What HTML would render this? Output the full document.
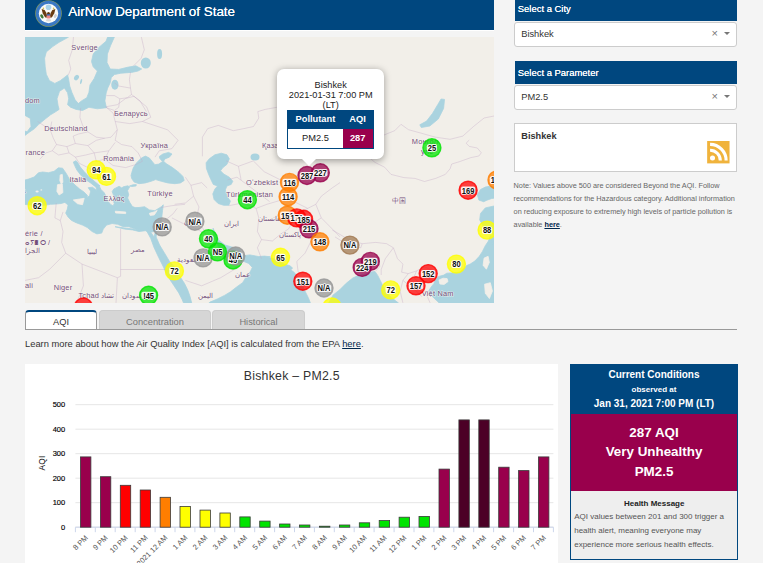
<!DOCTYPE html>
<html><head><meta charset="utf-8"><title>AirNow Department of State</title>
<style>
html,body{margin:0;padding:0;}
body{width:763px;height:563px;overflow:hidden;background:#f4f4f4;font-family:"Liberation Sans",sans-serif;position:relative;color:#333;}
.abs{position:absolute;}
.navy{background:#00477f;color:#fff;}
#hdr{left:25px;top:0;width:469px;height:30px;}
#hdrline{left:25px;top:30px;width:469px;height:1px;background:#fff;}
#hdr .t{position:absolute;left:43.3px;top:2.5px;font-size:13.4px;line-height:18px;white-space:nowrap;text-shadow:0 0 0.4px #fff;}
#map{left:25px;top:37px;width:469px;height:265.7px;background:#f2efe9;overflow:hidden;}
.sbh{left:515px;width:222px;height:22px;font-size:9.45px;line-height:19.4px;text-indent:2.8px;text-shadow:0 0 0.25px #fff;}
.sel{left:514.2px;width:221.2px;height:23px;background:#fff;border:1px solid #ccc;border-radius:3px;font-size:9.3px;line-height:22px;color:#333;}
.sel span{position:absolute;left:6px;top:0;}
.sel .x{position:absolute;left:196.3px;top:-1px;font-size:11px;color:#777;}
.sel .arr{position:absolute;left:208.8px;top:9.3px;width:0;height:0;border-left:3px solid transparent;border-right:3px solid transparent;border-top:3px solid #777;}
#citybox{left:514.3px;top:123px;width:221.2px;height:46.6px;background:#fff;border:1px solid #ccc;}
#citybox b{position:absolute;left:6px;top:7px;font-size:9.2px;line-height:11px;color:#333;}
#note{left:513.6px;top:179.3px;width:240px;font-size:7.3px;line-height:13px;color:#666;}
#note a{color:#00264d;font-weight:bold;text-decoration:underline;}
.tab{top:310px;height:19px;border:1px solid #ccc;border-bottom:none;border-radius:4px 4px 0 0;background:#d6d6d6;color:#777;font-size:9.3px;line-height:22px;text-align:center;}
#tab1{left:25px;width:70px;background:#fff;border-color:#999;border-top:2px solid #00477f;height:18px;color:#333;line-height:20px;}
#tabline{left:25px;top:329px;width:712px;height:1px;background:#999;}
#learn{left:25px;top:337.7px;font-size:9.35px;line-height:12px;color:#333;white-space:nowrap;}
#learn a{color:#00264d;text-decoration:underline;}
#chartbox{left:25px;top:364px;width:533px;height:199px;background:#fff;}
#cc{left:570px;top:364px;width:166px;height:193.5px;border:1px solid #00477f;background:#eee;}
#cc .h{position:absolute;left:0;top:0;width:166px;height:49px;text-align:center;font-weight:bold;font-size:10px;line-height:14px;}
#cc .p{position:absolute;left:0;top:49px;width:166px;height:77px;background:#99004c;color:#fff;text-align:center;font-weight:bold;font-size:13.4px;line-height:19.4px;}
#cc .m{position:absolute;left:3.2px;top:132px;width:163px;font-size:8px;line-height:14.2px;color:#555;white-space:nowrap;}
</style></head><body>
<div id="hdr" class="abs navy"><div class="t">AirNow Department of State</div>
<svg class="abs" style="left:9.9px;top:0" width="27" height="27" viewBox="0 0 27 27"><circle cx="13.5" cy="13.5" r="13.3" fill="#8a9a55"/><circle cx="13.5" cy="13.5" r="12.7" fill="#3a78c4"/><circle cx="13.5" cy="13.5" r="9.7" fill="#fbfbf8"/><circle cx="13.5" cy="7.2" r="2.8" fill="#a9d3ea"/><path d="M6.6 9.1 L9.6 9.9 L11.3 12.7 L12.1 15.4 L11.3 18.2 L9.6 16.5 L7.7 13.2 Z" fill="#6a3d12"/><path d="M20.4 9.1 L17.4 9.9 L15.7 12.7 L14.9 15.4 L15.7 18.2 L17.4 16.5 L19.3 13.2 Z" fill="#6a3d12"/><ellipse cx="13.5" cy="13.6" rx="1.5" ry="1.6" fill="#5a3410"/><circle cx="8.4" cy="8.4" r="0.8" fill="#d4c24e"/><circle cx="18.6" cy="8.4" r="0.8" fill="#d4c24e"/><ellipse cx="6.9" cy="16.4" rx="1.4" ry="2.3" transform="rotate(-30 6.9 16.4)" fill="#3d7a3a"/><ellipse cx="20.3" cy="16" rx="1.3" ry="2" transform="rotate(30 20.3 16)" fill="#d0d0d0"/><rect x="11.8" y="14.1" width="3.4" height="4.3" rx="0.6" fill="#ee8688"/><rect x="11.8" y="14.1" width="3.4" height="1.4" fill="#2d5fa8"/><ellipse cx="13.5" cy="20.3" rx="2.6" ry="1.3" fill="#dcdcdc"/></svg></div>
<div id="hdrline" class="abs"></div>
<div id="map" class="abs"><svg class="abs" style="left:0;top:0;font-family:'Liberation Sans',sans-serif" width="469" height="266" viewBox="0 0 469 266"><path d="M-1.1 -1.1 L43.7 -1.1 L43.7 0.0 L34.1 5.3 L27.7 9.6 L21.3 14.9 L19.6 21.3 L20.2 29.8 L21.3 37.3 L24.5 43.7 L29.8 46.4 L35.2 43.7 L39.4 40.5 L42.6 37.9 L43.7 42.6 L44.7 49.0 L46.9 55.4 L50.1 62.8 L53.3 66.5 L51.1 69.2 L45.8 70.3 L42.6 67.7 L43.7 61.8 L42.6 55.8 L39.4 51.1 L34.5 54.3 L32.0 61.8 L33.0 68.2 L34.1 72.4 L30.9 74.6 L25.6 77.8 L20.2 82.0 L13.8 87.3 L9.6 91.6 L4.3 95.2 L0.0 98.4 L-1.1 98.4 L-1.1 93.7 L2.1 94.8 L6.0 89.5 L5.3 81.4 L0.0 78.4 L-1.1 78.4Z" fill="#aad3df" stroke="#aad3df" stroke-width="0.8" stroke-linejoin="round" />
<path d="M83.1 -1.1 L89.9 -1.1 L85.6 8.5 L82.4 17.0 L82.0 25.6 L85.2 32.0 L93.7 32.4 L102.3 30.3 L110.8 28.8 L116.7 32.0 L112.9 34.1 L106.5 35.4 L95.9 36.2 L89.5 37.5 L86.3 40.5 L85.2 45.8 L82.7 51.1 L81.2 55.8 L79.9 63.9 L81.4 70.7 L72.4 71.8 L63.9 70.3 L57.5 73.5 L51.1 72.4 L45.8 70.3 L51.1 69.2 L53.3 66.5 L56.5 63.9 L61.8 60.7 L63.9 55.4 L65.0 47.9 L69.2 41.5 L72.4 34.1 L68.2 29.8 L66.5 24.5 L68.2 17.0 L73.5 10.7 L81.0 4.3Z" fill="#aad3df" stroke="#aad3df" stroke-width="0.8" stroke-linejoin="round" />
<ellipse cx="120.8" cy="26.0" rx="5" ry="5.5" fill="#aad3df" transform="rotate(0 120.8 26.0)"/>
<ellipse cx="89.9" cy="47.7" rx="3.6" ry="5" fill="#aad3df" transform="rotate(0 89.9 47.7)"/>
<ellipse cx="134.6" cy="17.0" rx="2.5" ry="5" fill="#aad3df" transform="rotate(0 134.6 17.0)"/>
<ellipse cx="51.5" cy="40.6" rx="2.2" ry="3" fill="#aad3df" transform="rotate(35 51.5 40.6)"/>
<ellipse cx="56.1" cy="44.6" rx="0.9" ry="2.6" fill="#aad3df" transform="rotate(15 56.1 44.6)"/>
<path d="M-2.2 143.6 L3.5 142.1 L9.2 140.0 L13.5 135.7 L17.7 135.0 L23.4 135.7 L29.1 134.3 L33.4 130.8 L37.6 131.2 L41.2 136.4 L44.0 141.4 L49.0 147.1 L54.7 152.1 L58.9 154.9 L62.5 158.5 L61.8 162.0 L59.7 163.0 L64.6 158.5 L65.6 154.2 L63.2 150.7 L67.5 150.2 L71.7 153.5 L71.0 150.2 L65.3 145.7 L61.1 143.1 L56.1 138.6 L51.8 132.9 L49.7 128.6 L48.3 125.1 L51.1 123.7 L53.3 126.5 L55.1 129.8 L59.1 134.6 L63.9 139.4 L70.3 145.0 L75.1 149.0 L73.8 148.2 L76.0 152.5 L79.2 155.7 L81.3 160.0 L82.9 164.2 L85.6 167.4 L88.2 169.0 L89.3 166.3 L87.7 163.2 L90.9 162.1 L88.8 158.9 L87.2 154.6 L88.8 152.0 L90.9 150.9 L94.1 149.3 L96.8 150.9 L98.3 149.8 L102.6 148.8 L104.7 149.8 L102.6 153.6 L103.7 157.8 L102.6 161.0 L104.7 165.3 L107.4 169.5 L110.1 170.6 L114.0 170.5 L119.6 169.7 L124.4 172.9 L129.9 173.7 L136.3 169.7 L138.3 167.8 L137.5 173.7 L136.8 180.1 L135.5 188.1 L133.9 192.9 L129.9 194.5 L124.4 195.3 L120.4 193.7 L114.0 194.5 L107.6 192.9 L99.6 192.1 L90.0 189.7 L115.1 192.9 L110.3 192.1 L103.9 189.7 L97.5 189.4 L92.7 187.3 L87.1 186.5 L81.5 188.1 L78.3 192.1 L76.7 196.1 L71.9 196.9 L67.1 194.5 L62.3 190.5 L57.5 188.1 L51.1 185.7 L46.3 183.3 L43.1 180.1 L40.7 176.1 L42.3 172.1 L43.1 168.1 L39.9 165.4 L36.0 166.5 L31.2 167.0 L25.6 167.3 L20.8 168.1 L12.8 168.9 L6.4 168.1 L-1.6 167.3Z" fill="#aad3df" stroke="#aad3df" stroke-width="0.8" stroke-linejoin="round" />
<path d="M35.2 137.9 L37.3 137.4 L37.9 145.4 L36.2 146.8 L34.8 143.6Z" fill="#f2efe9" stroke="#f2efe9" stroke-width="0.8" stroke-linejoin="round" />
<path d="M32.5 147.7 L37.3 146.8 L37.9 155.6 L34.1 158.0 L31.9 154.2Z" fill="#f2efe9" stroke="#f2efe9" stroke-width="0.8" stroke-linejoin="round" />
<ellipse cx="12.1" cy="154.5" rx="1.6" ry="1.1" fill="#f2efe9" transform="rotate(0 12.1 154.5)"/>
<ellipse cx="16.3" cy="152.9" rx="0.9" ry="0.7" fill="#f2efe9" transform="rotate(0 16.3 152.9)"/>
<path d="M48.3 163.0 L54.7 162.0 L59.2 161.3 L57.5 167.7 L52.5 166.7Z" fill="#f2efe9" stroke="#f2efe9" stroke-width="0.8" stroke-linejoin="round" />
<path d="M90.3 174.2 L100.7 175.0 L100.7 176.6 L90.6 176.0Z" fill="#f2efe9" stroke="#f2efe9" stroke-width="0.8" stroke-linejoin="round" />
<path d="M124.4 176.3 L129.9 174.7 L132.2 173.4 L129.3 177.9 L125.2 178.4Z" fill="#f2efe9" stroke="#f2efe9" stroke-width="0.8" stroke-linejoin="round" />
<path d="M106.8 135.4 L108.4 130.6 L111.6 125.8 L116.4 121.0 L120.4 119.1 L124.4 121.0 L127.6 125.0 L129.9 127.7 L133.9 127.1 L137.5 124.5 L134.7 121.3 L134.4 119.4 L137.9 117.0 L143.5 115.4 L147.0 117.0 L144.3 120.2 L139.9 121.9 L138.6 124.2 L141.1 126.6 L147.5 130.6 L153.9 135.4 L157.9 139.4 L159.2 143.4 L155.5 145.9 L149.9 146.7 L142.7 145.9 L136.3 144.3 L130.7 142.6 L126.0 144.3 L120.4 145.9 L114.0 146.7 L109.2 145.1 L106.8 141.8 L106.0 138.6Z" fill="#aad3df" stroke="#aad3df" stroke-width="0.8" stroke-linejoin="round" />
<path d="M104.5 149.0 L107.9 147.8 L111.3 147.6 L111.1 148.9 L106.9 149.5Z" fill="#aad3df" stroke="#aad3df" stroke-width="0.8" stroke-linejoin="round" />
<path d="M121.8 188.8 L125.8 195.2 L129.0 200.0 L131.4 191.2 L132.5 191.5 L131.1 200.0 L134.6 208.0 L139.4 215.9 L144.2 223.9 L149.0 229.5 L154.6 239.1 L159.4 246.3 L162.6 252.7 L164.9 259.1 L167.2 267.9 L159.4 267.9 L157.0 262.3 L153.8 255.9 L149.0 248.7 L144.2 241.5 L141.8 237.5 L138.6 230.3 L133.8 220.7 L129.0 210.4 L125.8 201.6 L120.2 191.2Z" fill="#aad3df" stroke="#aad3df" stroke-width="0.8" stroke-linejoin="round" />
<path d="M181.1 125.8 L184.3 121.8 L189.9 117.8 L196.3 116.2 L201.9 117.8 L204.3 121.8 L201.9 127.4 L197.9 130.6 L195.5 133.8 L198.7 137.0 L204.3 140.2 L207.8 144.2 L206.2 147.4 L201.9 149.0 L200.3 152.9 L201.9 159.3 L205.4 164.1 L203.8 168.3 L198.7 168.3 L193.1 166.5 L189.1 162.5 L187.8 156.9 L189.9 152.1 L192.6 149.0 L188.3 147.4 L185.9 142.6 L183.5 137.0 L181.4 131.4Z" fill="#aad3df" stroke="#aad3df" stroke-width="0.8" stroke-linejoin="round" />
<ellipse cx="230" cy="120" rx="4.5" ry="3.5" fill="#aad3df"/>
<path d="M188.1 191.2 L190.5 196.8 L193.7 203.2 L200.1 208.0 L208.1 210.4 L214.5 212.0 L216.4 216.1 L220.0 218.5 L224.9 217.9 L233.3 219.5 L239.4 219.1 L245.4 219.8 L243.4 220.4 L248.1 221.5 L259.3 227.1 L264.9 228.7 L267.6 231.1 L265.7 232.9 L268.9 235.1 L272.1 239.1 L276.1 244.7 L279.3 252.7 L283.3 260.7 L286.2 267.9 L180.2 269.3 L185.0 265.1 L192.3 262.0 L199.5 258.4 L205.5 254.8 L211.6 250.0 L217.6 245.7 L221.3 239.7 L225.5 234.3 L227.3 230.4 L223.7 226.4 L217.6 224.0 L214.0 222.2 L212.9 226.8 L204.9 225.5 L200.1 222.3 L196.9 215.9 L193.7 210.4 L190.5 203.2 L188.4 196.8Z" fill="#aad3df" stroke="#aad3df" stroke-width="0.8" stroke-linejoin="round" />
<path d="M302.9 267.2 L308.1 258.0 L314.7 252.8 L321.2 246.3 L327.8 241.0 L333.0 238.6 L339.6 237.3 L344.8 235.1 L350.0 234.5 L352.7 238.4 L355.3 243.6 L357.9 248.9 L361.8 255.4 L366.4 260.7 L370.4 263.6 L374.9 267.2Z" fill="#aad3df" stroke="#aad3df" stroke-width="0.8" stroke-linejoin="round" />
<path d="M416.5 270.6 L413.5 265.3 L409.4 261.5 L405.2 257.3 L403.7 253.7 L406.0 250.2 L409.0 246.4 L410.5 241.2 L412.8 240.1 L414.6 239.2 L418.8 238.1 L421.8 236.2 L426.4 235.9 L434.7 235.1 L438.4 232.1 L441.5 228.6 L445.2 227.1 L449.8 224.1 L454.3 219.3 L457.3 214.7 L460.3 208.7 L463.4 204.1 L465.6 198.1 L468.6 208.0 L465.4 203.2 L468.6 192.0 L461.9 193.0 L457.9 188.5 L454.7 182.9 L455.5 176.5 L460.3 170.9 L471.4 168.5 L471.4 258.8 L471.4 267.9Z" fill="#aad3df" stroke="#aad3df" stroke-width="0.8" stroke-linejoin="round" />
<path d="M452.3 157.7 L455.5 152.5 L460.3 150.1 L464.3 149.3 L471.4 150.3 L471.4 160.8 L466.7 161.5 L461.9 163.2 L458.7 164.7 L453.9 163.1Z" fill="#aad3df" stroke="#aad3df" stroke-width="0.8" stroke-linejoin="round" />
<path d="M414.0 243.0 L418.1 241.2 L422.1 241.6 L423.0 244.6 L419.1 247.4 L414.9 247.0Z" fill="#f2efe9" stroke="#f2efe9" stroke-width="0.8" stroke-linejoin="round" />
<path d="M459.1 221.1 L463.1 219.3 L464.3 225.3 L461.4 232.2 L458.1 228.3Z" fill="#f2efe9" stroke="#f2efe9" stroke-width="0.8" stroke-linejoin="round" />
<path d="M459.6 247.2 L465.3 245.7 L467.4 254.0 L464.4 261.5 L460.3 256.3Z" fill="#f2efe9" stroke="#f2efe9" stroke-width="0.8" stroke-linejoin="round" />
<path d="M419.5 62.4 L418.6 71.4 L413.3 82.0 L404.8 89.0 L396.3 90.5 L394.8 87.8 L401.6 84.1 L407.6 76.3 L412.7 67.7 L416.1 62.0Z" fill="#aad3df" stroke="#aad3df" stroke-width="0.8" stroke-linejoin="round" /><path d="M55.6 70.8 L54.9 80.3 L57.7 88.6 L62.9 94.9 M80.7 69.8 L88.1 76.1 L90.2 84.5 L92.3 92.8 L86.0 100.2 M62.9 94.9 L71.3 100.2 L79.7 101.2 L86.0 100.2 M26.8 84.5 L25.2 92.8 L28.3 101.2 L31.5 107.5 L27.3 113.8 L21.0 115.9 L14.7 122.2 M31.5 107.5 L41.9 109.6 L50.3 106.5 L48.2 99.1 L53.5 97.0 L62.9 94.9 M80.7 69.8 L92.3 67.7 L100.7 61.4 L109.0 59.3 L121.6 69.8 L125.8 80.3 L117.4 84.5 M90.2 84.5 L104.8 86.6 L117.4 84.5 L130.0 88.6 L142.6 92.8 L153.1 103.3 L146.8 111.7 L134.2 113.8 L130.0 120.1 M92.3 92.8 L90.2 103.3 L96.5 107.5 L106.9 109.6 L113.2 115.9 L117.4 124.3 M90.2 105.4 L83.9 113.8 L79.7 122.2 L88.1 128.5 L100.7 130.6 L111.1 127.4 L117.4 124.3 M50.3 106.5 L62.9 108.6 L71.3 103.3 L79.7 101.2 M62.9 108.6 L69.2 115.9 L83.9 113.8 M41.9 109.6 L44.0 115.9 L50.3 120.1 L60.8 118.0 L69.2 115.9 M12.6 84.5 L18.9 88.6 L25.2 92.8 M50.3 120.1 L54.5 126.4 L62.9 130.6 L71.3 136.9 M69.2 115.9 L71.3 124.3 L79.7 122.2 M27.3 113.8 L33.6 118.0 L44.0 115.9 M48.6 -1.1 L47.3 12.8 L43.7 23.4 L45.8 32.0 L43.2 38.3 M116.1 -1.1 L119.3 12.8 L116.1 21.3 L108.6 28.8 M105.5 35.2 L104.4 42.6 L105.5 51.1 L106.5 57.5 M89.5 45.8 L93.7 49.0 L105.5 51.1 M81.4 58.6 L89.5 58.6 L94.8 61.8 L102.3 60.7 L106.5 57.5 L115.0 63.9 L121.4 74.6 M94.8 61.8 L93.7 70.3 L89.5 73.5 L81.4 70.7 M177.4 119.3 L177.4 100.1 L182.7 91.6 L193.3 88.4 L208.3 93.7 L218.9 91.6 L228.5 89.5 L233.8 81.0 L232.8 74.6 L240.2 72.4 L251.9 70.3 M359.0 98.0 L369.7 93.7 L376.0 87.3 L383.5 92.7 L395.2 95.9 L410.1 100.1 L425.0 102.3 L437.8 99.1 L448.5 89.5 L459.1 81.0 L470.0 78.8 M340.4 117.4 L350.0 125.4 L359.6 130.2 L366.0 137.4 L378.8 140.6 L389.9 141.4 L399.5 144.5 L410.7 141.4 L420.3 137.4 L425.1 131.8 L426.7 127.0 L434.7 124.6 L445.9 120.6 L453.9 119.0 L456.3 115.8 L452.3 111.0 L444.3 109.4 L441.1 106.2 L444.3 103.0 M203.9 168.7 L217.5 166.0 L231.1 171.4 L233.8 180.9 L232.4 194.5 L236.5 202.6 L232.4 210.8 L236.5 221.7 M236.5 202.6 L247.4 204.0 L255.5 197.2 L263.7 191.8 L269.1 180.9 L274.5 175.5 L282.7 171.4 M231.1 171.4 L241.9 167.3 L255.5 163.3 L269.1 164.6 L282.7 171.4 L290.8 167.3 L296.3 159.2 L307.1 151.0 L315.0 145.6 M202.5 142.9 L212.0 140.2 L222.9 148.3 L233.8 156.5 L244.6 164.6 M201.2 123.9 L213.4 129.3 L216.1 142.9 M213.4 129.3 L228.3 123.9 L239.2 134.7 L250.1 140.2 L260.9 145.6 L271.8 142.9 L282.7 145.6 L296.3 142.9 M273.2 235.2 L271.8 224.4 L280.0 216.2 L285.4 205.4 L290.8 194.5 L288.1 186.3 L296.3 180.9 L307.1 191.8 L315.0 199.9 M296.3 180.9 L290.8 167.3 M160.4 140.2 L165.9 148.3 L168.6 159.2 L174.0 170.0 L171.3 180.9 L178.1 191.8 L180.8 197.2 M149.6 167.3 L160.4 166.0 L168.6 159.2 M146.9 180.9 L157.7 186.3 L171.3 191.8 L180.8 197.2 M160.4 243.4 L176.7 248.8 L195.7 240.7 L209.3 232.5 L216.1 221.7 L213.4 216.2 M165.9 148.3 L176.7 145.6 L182.2 151.0 M95.6 191.8 L95.6 239.3 L92.4 240.7 L91.0 265.9 M95.6 232.5 L141.3 232.5 M38.0 174.9 L35.3 183.6 L38.0 194.5 L36.7 205.4 L40.7 216.2 L57.0 227.1 L92.4 240.7 M40.7 216.2 L24.4 232.5 L13.6 240.7 L0.0 243.4 M57.0 227.1 L58.4 248.8 L51.6 265.9 M31.2 166.0 L29.9 180.9 L35.3 183.6 M135.8 170.6 L146.7 168.7 L160.0 167.3 M133.7 183.6 L141.3 182.3 L148.1 176.8 L152.1 171.4 M307.3 193.1 L310.0 194.5 L323.6 202.6 L337.2 206.7 L350.7 205.4 L361.6 206.7 L368.4 210.8 M310.0 199.9 L320.9 206.7 L335.8 210.8 L337.2 206.7 M368.4 210.8 L372.5 221.7 L377.9 227.1 L376.6 235.2 L383.3 236.6 M368.4 210.8 L360.3 221.7 L356.2 232.5 L356.2 238.0 M342.6 218.9 L353.5 220.3 L354.8 229.8 L350.7 233.9 M342.6 218.9 L341.2 232.5 M383.3 236.6 L377.9 243.4 L375.2 254.3 L377.9 265.9 M383.3 236.6 L391.5 233.9 L399.6 229.8 L407.8 233.9 L403.7 243.4 M391.5 233.9 L388.8 240.7 L396.9 248.8 L402.4 259.7 L405.1 265.9 M377.9 243.4 L384.7 248.8 L391.5 254.3 L396.9 259.7" fill="none" stroke="#c4a9c6" stroke-opacity="0.6" stroke-width="0.65" stroke-linejoin="round"/><g font-size="7.4" fill="#6b4475" fill-opacity="0.95" stroke="#f6f3ee" stroke-width="1.2" stroke-opacity="0.7" paint-order="stroke" letter-spacing="0.2"><text x="59.6" y="12.5" text-anchor="middle">Sverige</text><text x="0.0" y="65.6" text-anchor="start">dom</text><text x="-3.5" y="155.6" text-anchor="start">a</text><text x="40.9" y="93.6" text-anchor="middle">Deutschland</text><text x="105.9" y="78.6" text-anchor="middle">Беларусь</text><text x="129.3" y="110.6" text-anchor="middle">Україна</text><text x="0.5" y="118.4" text-anchor="start">rance</text><text x="93.7" y="124.4" text-anchor="middle">România</text><text x="53.0" y="145.3" text-anchor="middle">Italia</text><text x="89.1" y="163.8" text-anchor="middle">Ελλάς</text><text x="135.0" y="159.4" text-anchor="middle">Türkiye</text><text x="67.4" y="216.5" text-anchor="middle">ليبيا</text><text x="112.7" y="214.6" text-anchor="middle">مصر</text><text x="38.0" y="252.6" text-anchor="middle">Niger</text><text x="71.4" y="260.7" text-anchor="middle">Tchad تشاد</text><text x="0.0" y="199.4" text-anchor="start">érie /</text><text x="0.0" y="207.8" text-anchor="start">ⴰⵢⴻⵔ /</text><text x="0.0" y="216.0" text-anchor="start">الجزا</text><text x="0.0" y="251.2" text-anchor="start">ali</text><text x="237.0" y="110.6" text-anchor="start">Қаза</text><text x="221.0" y="148.0" text-anchor="start">Oʻzbekist</text><text x="201.0" y="159.7" text-anchor="start">Türkmenistan</text><text x="206.6" y="189.3" text-anchor="middle">ایران</text><text x="246.0" y="183.9" text-anchor="middle">افغانستان</text><text x="265.0" y="199.6" text-anchor="middle">پاکستان</text><text x="217.5" y="240.4" text-anchor="middle">عمان</text><text x="180.8" y="260.7" text-anchor="middle">اليمن</text><text x="165.0" y="224.7" text-anchor="middle">السعودية</text><text x="168.0" y="186.5" text-anchor="middle">العراق</text><text x="108.7" y="261.3" text-anchor="middle">السودان</text><text x="400.0" y="106.8" text-anchor="middle">Монгол</text><text x="402.0" y="116.5" text-anchor="middle">улс</text><text x="374.4" y="165.7" text-anchor="middle">中国</text><text x="412.7" y="259.4" text-anchor="middle">Việt Nam</text></g><circle cx="12.2" cy="168.7" r="9" fill="#ffff00" fill-opacity="0.74" stroke="#ffff00" stroke-opacity="0.8" stroke-width="1.4"/>
<circle cx="71.2" cy="132.8" r="9" fill="#ffff00" fill-opacity="0.74" stroke="#ffff00" stroke-opacity="0.8" stroke-width="1.4"/>
<circle cx="81.5" cy="139.4" r="9" fill="#ffff00" fill-opacity="0.74" stroke="#ffff00" stroke-opacity="0.8" stroke-width="1.4"/>
<circle cx="137.2" cy="189.9" r="9" fill="#969696" fill-opacity="0.74" stroke="#969696" stroke-opacity="0.8" stroke-width="1.4"/>
<circle cx="149.4" cy="233.9" r="9" fill="#ffff00" fill-opacity="0.74" stroke="#ffff00" stroke-opacity="0.8" stroke-width="1.4"/>
<circle cx="123.6" cy="258.3" r="9" fill="#00e400" fill-opacity="0.74" stroke="#00e400" stroke-opacity="0.8" stroke-width="1.4"/>
<circle cx="58.4" cy="270.0" r="9" fill="#ff0000" fill-opacity="0.74" stroke="#ff0000" stroke-opacity="0.8" stroke-width="1.4"/>
<circle cx="169.9" cy="184.2" r="9" fill="#969696" fill-opacity="0.74" stroke="#969696" stroke-opacity="0.8" stroke-width="1.4"/>
<circle cx="183.5" cy="201.8" r="9" fill="#00e400" fill-opacity="0.74" stroke="#00e400" stroke-opacity="0.8" stroke-width="1.4"/>
<circle cx="178.1" cy="220.9" r="9" fill="#969696" fill-opacity="0.74" stroke="#969696" stroke-opacity="0.8" stroke-width="1.4"/>
<circle cx="208.0" cy="223.0" r="9" fill="#00e400" fill-opacity="0.74" stroke="#00e400" stroke-opacity="0.8" stroke-width="1.4"/>
<circle cx="192.5" cy="214.9" r="9" fill="#00e400" fill-opacity="0.74" stroke="#00e400" stroke-opacity="0.8" stroke-width="1.4"/>
<circle cx="210.7" cy="219.0" r="9" fill="#969696" fill-opacity="0.74" stroke="#969696" stroke-opacity="0.8" stroke-width="1.4"/>
<circle cx="222.4" cy="162.7" r="9" fill="#00e400" fill-opacity="0.74" stroke="#00e400" stroke-opacity="0.8" stroke-width="1.4"/>
<circle cx="263.1" cy="159.7" r="9" fill="#ff7e00" fill-opacity="0.74" stroke="#ff7e00" stroke-opacity="0.8" stroke-width="1.4"/>
<circle cx="264.5" cy="145.4" r="9" fill="#ff7e00" fill-opacity="0.74" stroke="#ff7e00" stroke-opacity="0.8" stroke-width="1.4"/>
<circle cx="282.0" cy="138.5" r="9" fill="#99004c" fill-opacity="0.74" stroke="#99004c" stroke-opacity="0.8" stroke-width="1.4"/>
<circle cx="295.3" cy="135.8" r="9" fill="#99004c" fill-opacity="0.74" stroke="#99004c" stroke-opacity="0.8" stroke-width="1.4"/>
<circle cx="262.3" cy="178.2" r="9" fill="#ff7e00" fill-opacity="0.74" stroke="#ff7e00" stroke-opacity="0.8" stroke-width="1.4"/>
<circle cx="271.8" cy="180.9" r="9" fill="#ff0000" fill-opacity="0.74" stroke="#ff0000" stroke-opacity="0.8" stroke-width="1.4"/>
<circle cx="278.6" cy="182.3" r="9" fill="#ff0000" fill-opacity="0.74" stroke="#ff0000" stroke-opacity="0.8" stroke-width="1.4"/>
<circle cx="284.0" cy="191.8" r="9" fill="#99004c" fill-opacity="0.74" stroke="#99004c" stroke-opacity="0.8" stroke-width="1.4"/>
<circle cx="294.9" cy="204.8" r="9" fill="#ff7e00" fill-opacity="0.74" stroke="#ff7e00" stroke-opacity="0.8" stroke-width="1.4"/>
<circle cx="255.5" cy="220.3" r="9" fill="#ffff00" fill-opacity="0.74" stroke="#ffff00" stroke-opacity="0.8" stroke-width="1.4"/>
<circle cx="277.8" cy="244.2" r="9" fill="#ff0000" fill-opacity="0.74" stroke="#ff0000" stroke-opacity="0.8" stroke-width="1.4"/>
<circle cx="299.0" cy="251.0" r="9" fill="#969696" fill-opacity="0.74" stroke="#969696" stroke-opacity="0.8" stroke-width="1.4"/>
<circle cx="307.0" cy="270.0" r="9" fill="#ffff00" fill-opacity="0.74" stroke="#ffff00" stroke-opacity="0.8" stroke-width="1.4"/>
<circle cx="324.9" cy="208.1" r="9" fill="#a07850" fill-opacity="0.74" stroke="#a07850" stroke-opacity="0.8" stroke-width="1.4"/>
<circle cx="337.2" cy="230.4" r="9" fill="#99004c" fill-opacity="0.74" stroke="#99004c" stroke-opacity="0.8" stroke-width="1.4"/>
<circle cx="345.3" cy="224.4" r="9" fill="#99004c" fill-opacity="0.74" stroke="#99004c" stroke-opacity="0.8" stroke-width="1.4"/>
<circle cx="365.7" cy="252.9" r="9" fill="#ffff00" fill-opacity="0.74" stroke="#ffff00" stroke-opacity="0.8" stroke-width="1.4"/>
<circle cx="391.0" cy="248.8" r="9" fill="#ff0000" fill-opacity="0.74" stroke="#ff0000" stroke-opacity="0.8" stroke-width="1.4"/>
<circle cx="403.2" cy="236.6" r="9" fill="#ff0000" fill-opacity="0.74" stroke="#ff0000" stroke-opacity="0.8" stroke-width="1.4"/>
<circle cx="431.4" cy="227.1" r="9" fill="#ffff00" fill-opacity="0.74" stroke="#ffff00" stroke-opacity="0.8" stroke-width="1.4"/>
<circle cx="462.1" cy="193.1" r="9" fill="#ffff00" fill-opacity="0.74" stroke="#ffff00" stroke-opacity="0.8" stroke-width="1.4"/>
<circle cx="443.1" cy="153.2" r="9" fill="#ff0000" fill-opacity="0.74" stroke="#ff0000" stroke-opacity="0.8" stroke-width="1.4"/>
<circle cx="472.0" cy="142.9" r="9" fill="#ff7e00" fill-opacity="0.74" stroke="#ff7e00" stroke-opacity="0.8" stroke-width="1.4"/>
<circle cx="406.9" cy="110.8" r="9" fill="#00e400" fill-opacity="0.74" stroke="#00e400" stroke-opacity="0.8" stroke-width="1.4"/>
<rect x="7.2" y="165.1" width="10.1" height="7.4" rx="2" fill="#fff" fill-opacity="0.85"/><text transform="translate(12.2,172.0) scale(0.84,1)" text-anchor="middle" font-size="9" font-weight="bold" fill="#111" stroke="#fff" stroke-width="1.6" stroke-opacity="0.9" stroke-linejoin="round" paint-order="stroke">62</text>
<rect x="66.2" y="129.2" width="10.1" height="7.4" rx="2" fill="#fff" fill-opacity="0.85"/><text transform="translate(71.2,136.1) scale(0.84,1)" text-anchor="middle" font-size="9" font-weight="bold" fill="#111" stroke="#fff" stroke-width="1.6" stroke-opacity="0.9" stroke-linejoin="round" paint-order="stroke">94</text>
<rect x="76.5" y="135.8" width="10.1" height="7.4" rx="2" fill="#fff" fill-opacity="0.85"/><text transform="translate(81.5,142.7) scale(0.84,1)" text-anchor="middle" font-size="9" font-weight="bold" fill="#111" stroke="#fff" stroke-width="1.6" stroke-opacity="0.9" stroke-linejoin="round" paint-order="stroke">61</text>
<rect x="130.0" y="186.3" width="14.4" height="7.4" rx="2" fill="#fff" fill-opacity="0.85"/><text transform="translate(137.2,193.2) scale(0.84,1)" text-anchor="middle" font-size="9" font-weight="bold" fill="#111" stroke="#fff" stroke-width="1.6" stroke-opacity="0.9" stroke-linejoin="round" paint-order="stroke">N/A</text>
<rect x="144.3" y="230.3" width="10.1" height="7.4" rx="2" fill="#fff" fill-opacity="0.85"/><text transform="translate(149.4,237.2) scale(0.84,1)" text-anchor="middle" font-size="9" font-weight="bold" fill="#111" stroke="#fff" stroke-width="1.6" stroke-opacity="0.9" stroke-linejoin="round" paint-order="stroke">72</text>
<rect x="116.4" y="254.7" width="14.4" height="7.4" rx="2" fill="#fff" fill-opacity="0.85"/><text transform="translate(123.6,261.6) scale(0.84,1)" text-anchor="middle" font-size="9" font-weight="bold" fill="#111" stroke="#fff" stroke-width="1.6" stroke-opacity="0.9" stroke-linejoin="round" paint-order="stroke">!45</text>
<rect x="162.7" y="180.6" width="14.4" height="7.4" rx="2" fill="#fff" fill-opacity="0.85"/><text transform="translate(169.9,187.5) scale(0.84,1)" text-anchor="middle" font-size="9" font-weight="bold" fill="#111" stroke="#fff" stroke-width="1.6" stroke-opacity="0.9" stroke-linejoin="round" paint-order="stroke">N/A</text>
<rect x="178.4" y="198.2" width="10.1" height="7.4" rx="2" fill="#fff" fill-opacity="0.85"/><text transform="translate(183.5,205.1) scale(0.84,1)" text-anchor="middle" font-size="9" font-weight="bold" fill="#111" stroke="#fff" stroke-width="1.6" stroke-opacity="0.9" stroke-linejoin="round" paint-order="stroke">40</text>
<rect x="170.9" y="217.3" width="14.4" height="7.4" rx="2" fill="#fff" fill-opacity="0.85"/><text transform="translate(178.1,224.2) scale(0.84,1)" text-anchor="middle" font-size="9" font-weight="bold" fill="#111" stroke="#fff" stroke-width="1.6" stroke-opacity="0.9" stroke-linejoin="round" paint-order="stroke">N/A</text>
<rect x="202.9" y="219.4" width="10.1" height="7.4" rx="2" fill="#fff" fill-opacity="0.85"/><text transform="translate(208.0,226.3) scale(0.84,1)" text-anchor="middle" font-size="9" font-weight="bold" fill="#111" stroke="#fff" stroke-width="1.6" stroke-opacity="0.9" stroke-linejoin="round" paint-order="stroke">45</text>
<rect x="187.4" y="211.3" width="10.1" height="7.4" rx="2" fill="#fff" fill-opacity="0.85"/><text transform="translate(192.5,218.2) scale(0.84,1)" text-anchor="middle" font-size="9" font-weight="bold" fill="#111" stroke="#fff" stroke-width="1.6" stroke-opacity="0.9" stroke-linejoin="round" paint-order="stroke">N5</text>
<rect x="203.5" y="215.4" width="14.4" height="7.4" rx="2" fill="#fff" fill-opacity="0.85"/><text transform="translate(210.7,222.3) scale(0.84,1)" text-anchor="middle" font-size="9" font-weight="bold" fill="#111" stroke="#fff" stroke-width="1.6" stroke-opacity="0.9" stroke-linejoin="round" paint-order="stroke">N/A</text>
<rect x="217.3" y="159.1" width="10.1" height="7.4" rx="2" fill="#fff" fill-opacity="0.85"/><text transform="translate(222.4,166.0) scale(0.84,1)" text-anchor="middle" font-size="9" font-weight="bold" fill="#111" stroke="#fff" stroke-width="1.6" stroke-opacity="0.9" stroke-linejoin="round" paint-order="stroke">44</text>
<rect x="255.9" y="156.1" width="14.4" height="7.4" rx="2" fill="#fff" fill-opacity="0.85"/><text transform="translate(263.1,163.0) scale(0.84,1)" text-anchor="middle" font-size="9" font-weight="bold" fill="#111" stroke="#fff" stroke-width="1.6" stroke-opacity="0.9" stroke-linejoin="round" paint-order="stroke">114</text>
<rect x="257.3" y="141.8" width="14.4" height="7.4" rx="2" fill="#fff" fill-opacity="0.85"/><text transform="translate(264.5,148.7) scale(0.84,1)" text-anchor="middle" font-size="9" font-weight="bold" fill="#111" stroke="#fff" stroke-width="1.6" stroke-opacity="0.9" stroke-linejoin="round" paint-order="stroke">116</text>
<rect x="274.8" y="134.9" width="14.4" height="7.4" rx="2" fill="#fff" fill-opacity="0.85"/><text transform="translate(282.0,141.8) scale(0.84,1)" text-anchor="middle" font-size="9" font-weight="bold" fill="#111" stroke="#fff" stroke-width="1.6" stroke-opacity="0.9" stroke-linejoin="round" paint-order="stroke">287</text>
<rect x="288.1" y="132.2" width="14.4" height="7.4" rx="2" fill="#fff" fill-opacity="0.85"/><text transform="translate(295.3,139.1) scale(0.84,1)" text-anchor="middle" font-size="9" font-weight="bold" fill="#111" stroke="#fff" stroke-width="1.6" stroke-opacity="0.9" stroke-linejoin="round" paint-order="stroke">227</text>
<rect x="255.1" y="174.6" width="14.4" height="7.4" rx="2" fill="#fff" fill-opacity="0.85"/><text transform="translate(262.3,181.5) scale(0.84,1)" text-anchor="middle" font-size="9" font-weight="bold" fill="#111" stroke="#fff" stroke-width="1.6" stroke-opacity="0.9" stroke-linejoin="round" paint-order="stroke">151</text>
<rect x="264.6" y="177.3" width="14.4" height="7.4" rx="2" fill="#fff" fill-opacity="0.85"/><text transform="translate(271.8,184.2) scale(0.84,1)" text-anchor="middle" font-size="9" font-weight="bold" fill="#111" stroke="#fff" stroke-width="1.6" stroke-opacity="0.9" stroke-linejoin="round" paint-order="stroke">171</text>
<rect x="271.4" y="178.7" width="14.4" height="7.4" rx="2" fill="#fff" fill-opacity="0.85"/><text transform="translate(278.6,185.6) scale(0.84,1)" text-anchor="middle" font-size="9" font-weight="bold" fill="#111" stroke="#fff" stroke-width="1.6" stroke-opacity="0.9" stroke-linejoin="round" paint-order="stroke">185</text>
<rect x="276.8" y="188.2" width="14.4" height="7.4" rx="2" fill="#fff" fill-opacity="0.85"/><text transform="translate(284.0,195.1) scale(0.84,1)" text-anchor="middle" font-size="9" font-weight="bold" fill="#111" stroke="#fff" stroke-width="1.6" stroke-opacity="0.9" stroke-linejoin="round" paint-order="stroke">215</text>
<rect x="287.7" y="201.2" width="14.4" height="7.4" rx="2" fill="#fff" fill-opacity="0.85"/><text transform="translate(294.9,208.1) scale(0.84,1)" text-anchor="middle" font-size="9" font-weight="bold" fill="#111" stroke="#fff" stroke-width="1.6" stroke-opacity="0.9" stroke-linejoin="round" paint-order="stroke">148</text>
<rect x="250.4" y="216.7" width="10.1" height="7.4" rx="2" fill="#fff" fill-opacity="0.85"/><text transform="translate(255.5,223.6) scale(0.84,1)" text-anchor="middle" font-size="9" font-weight="bold" fill="#111" stroke="#fff" stroke-width="1.6" stroke-opacity="0.9" stroke-linejoin="round" paint-order="stroke">65</text>
<rect x="270.6" y="240.6" width="14.4" height="7.4" rx="2" fill="#fff" fill-opacity="0.85"/><text transform="translate(277.8,247.5) scale(0.84,1)" text-anchor="middle" font-size="9" font-weight="bold" fill="#111" stroke="#fff" stroke-width="1.6" stroke-opacity="0.9" stroke-linejoin="round" paint-order="stroke">151</text>
<rect x="291.8" y="247.4" width="14.4" height="7.4" rx="2" fill="#fff" fill-opacity="0.85"/><text transform="translate(299.0,254.3) scale(0.84,1)" text-anchor="middle" font-size="9" font-weight="bold" fill="#111" stroke="#fff" stroke-width="1.6" stroke-opacity="0.9" stroke-linejoin="round" paint-order="stroke">N/A</text>
<rect x="317.7" y="204.5" width="14.4" height="7.4" rx="2" fill="#fff" fill-opacity="0.85"/><text transform="translate(324.9,211.4) scale(0.84,1)" text-anchor="middle" font-size="9" font-weight="bold" fill="#111" stroke="#fff" stroke-width="1.6" stroke-opacity="0.9" stroke-linejoin="round" paint-order="stroke">N/A</text>
<rect x="330.0" y="226.8" width="14.4" height="7.4" rx="2" fill="#fff" fill-opacity="0.85"/><text transform="translate(337.2,233.7) scale(0.84,1)" text-anchor="middle" font-size="9" font-weight="bold" fill="#111" stroke="#fff" stroke-width="1.6" stroke-opacity="0.9" stroke-linejoin="round" paint-order="stroke">224</text>
<rect x="338.1" y="220.8" width="14.4" height="7.4" rx="2" fill="#fff" fill-opacity="0.85"/><text transform="translate(345.3,227.7) scale(0.84,1)" text-anchor="middle" font-size="9" font-weight="bold" fill="#111" stroke="#fff" stroke-width="1.6" stroke-opacity="0.9" stroke-linejoin="round" paint-order="stroke">219</text>
<rect x="360.6" y="249.3" width="10.1" height="7.4" rx="2" fill="#fff" fill-opacity="0.85"/><text transform="translate(365.7,256.2) scale(0.84,1)" text-anchor="middle" font-size="9" font-weight="bold" fill="#111" stroke="#fff" stroke-width="1.6" stroke-opacity="0.9" stroke-linejoin="round" paint-order="stroke">72</text>
<rect x="383.8" y="245.2" width="14.4" height="7.4" rx="2" fill="#fff" fill-opacity="0.85"/><text transform="translate(391.0,252.1) scale(0.84,1)" text-anchor="middle" font-size="9" font-weight="bold" fill="#111" stroke="#fff" stroke-width="1.6" stroke-opacity="0.9" stroke-linejoin="round" paint-order="stroke">157</text>
<rect x="396.0" y="233.0" width="14.4" height="7.4" rx="2" fill="#fff" fill-opacity="0.85"/><text transform="translate(403.2,239.9) scale(0.84,1)" text-anchor="middle" font-size="9" font-weight="bold" fill="#111" stroke="#fff" stroke-width="1.6" stroke-opacity="0.9" stroke-linejoin="round" paint-order="stroke">152</text>
<rect x="426.3" y="223.5" width="10.1" height="7.4" rx="2" fill="#fff" fill-opacity="0.85"/><text transform="translate(431.4,230.4) scale(0.84,1)" text-anchor="middle" font-size="9" font-weight="bold" fill="#111" stroke="#fff" stroke-width="1.6" stroke-opacity="0.9" stroke-linejoin="round" paint-order="stroke">80</text>
<rect x="457.1" y="189.5" width="10.1" height="7.4" rx="2" fill="#fff" fill-opacity="0.85"/><text transform="translate(462.1,196.4) scale(0.84,1)" text-anchor="middle" font-size="9" font-weight="bold" fill="#111" stroke="#fff" stroke-width="1.6" stroke-opacity="0.9" stroke-linejoin="round" paint-order="stroke">88</text>
<rect x="435.9" y="149.6" width="14.4" height="7.4" rx="2" fill="#fff" fill-opacity="0.85"/><text transform="translate(443.1,156.5) scale(0.84,1)" text-anchor="middle" font-size="9" font-weight="bold" fill="#111" stroke="#fff" stroke-width="1.6" stroke-opacity="0.9" stroke-linejoin="round" paint-order="stroke">169</text>
<rect x="464.8" y="139.3" width="14.4" height="7.4" rx="2" fill="#fff" fill-opacity="0.85"/><text transform="translate(472.0,146.2) scale(0.84,1)" text-anchor="middle" font-size="9" font-weight="bold" fill="#111" stroke="#fff" stroke-width="1.6" stroke-opacity="0.9" stroke-linejoin="round" paint-order="stroke">104</text>
<rect x="401.8" y="107.2" width="10.1" height="7.4" rx="2" fill="#fff" fill-opacity="0.85"/><text transform="translate(406.9,114.1) scale(0.84,1)" text-anchor="middle" font-size="9" font-weight="bold" fill="#111" stroke="#fff" stroke-width="1.6" stroke-opacity="0.9" stroke-linejoin="round" paint-order="stroke">25</text></svg><div class="abs" style="left:252px;top:32.4px;width:107.4px;height:89.8px;background:#fff;border-radius:7px;box-shadow:0 1.5px 7px rgba(0,0,0,0.35);"></div>
<svg class="abs" style="left:276px;top:121.8px" width="16" height="8" viewBox="0 0 16 8"><path d="M1 0 L15 0 L8 7 Z" fill="#fff"/></svg>
<div class="abs" style="left:252px;top:42.6px;width:107.4px;text-align:center;font-size:9.2px;line-height:10px;color:#222">Bishkek<br>2021-01-31 7:00 PM<br>(LT)</div>
<div class="abs" style="left:262.2px;top:73.3px;width:86.4px;height:39.1px;background:#00477f"></div>
<div class="abs" style="left:263.2px;top:92px;width:54.5px;height:19.4px;background:#fff"></div>
<div class="abs" style="left:317.7px;top:92px;width:29.9px;height:19.4px;background:#99004c"></div>
<div class="abs" style="left:263.2px;top:77.4px;width:54.5px;text-align:center;font-size:9.3px;line-height:11px;font-weight:bold;color:#fff">Pollutant</div>
<div class="abs" style="left:317.7px;top:77.4px;width:29.9px;text-align:center;font-size:9.3px;line-height:11px;font-weight:bold;color:#fff">AQI</div>
<div class="abs" style="left:263.2px;top:96.4px;width:54.5px;text-align:center;font-size:9.3px;line-height:11px;color:#222">PM2.5</div>
<div class="abs" style="left:317.7px;top:96.4px;width:29.9px;text-align:center;font-size:9.3px;line-height:11px;font-weight:bold;color:#fff">287</div>
</div>

<div class="abs navy sbh" style="top:-1px">Select a City</div>
<div class="abs sel" style="top:22px"><span>Bishkek</span><i class="x" style="font-style:normal">×</i><i class="arr"></i></div>
<div class="abs navy sbh" style="top:61px;height:23px;line-height:24px">Select a Parameter</div>
<div class="abs sel" style="top:84.8px"><span>PM2.5</span><i class="x" style="font-style:normal">×</i><i class="arr"></i></div>
<div id="citybox" class="abs"><b>Bishkek</b>
<svg class="abs" style="left:191.8px;top:17.3px" width="22.7" height="22.4" viewBox="0 0 23 23"><rect width="23" height="23" fill="#f0b33c"/><circle cx="5.5" cy="17.5" r="2.6" fill="#fff"/><path d="M3 9.5 A10.5 10.5 0 0 1 13.5 20" fill="none" stroke="#fff" stroke-width="3.2"/><path d="M3 3.5 A16.5 16.5 0 0 1 19.5 20" fill="none" stroke="#fff" stroke-width="3.2"/></svg></div>
<div id="note" class="abs">Note: Values above 500 are considered Beyond the AQI. Follow<br>recommendations for the Hazardous category. Additional information<br>on reducing exposure to extremely high levels of particle pollution is<br>available <a>here</a>.</div>

<div id="tab1" class="abs tab">AQI</div>
<div class="abs tab" style="left:99px;width:110px">Concentration</div>
<div class="abs tab" style="left:212px;width:91px">Historical</div>
<div id="tabline" class="abs"></div>
<div id="learn" class="abs">Learn more about how the Air Quality Index [AQI] is calculated from the EPA <a>here</a>.</div>

<div id="chartbox" class="abs"></div>
<svg class="abs" style="left:0;top:0;font-family:'Liberation Sans',sans-serif" width="763" height="563" viewBox="0 0 763 563">
<defs><clipPath id="cb"><rect x="25" y="364" width="533" height="199"/></clipPath></defs>
<g clip-path="url(#cb)">
<line x1="75.4" x2="553.4" y1="404.7" y2="404.7" stroke="#e6e6e6" stroke-width="1"/>
<text x="65.2" y="407.4" text-anchor="end" font-size="7.5" fill="#000" stroke="#000" stroke-width="0.15">500</text>
<line x1="75.4" x2="553.4" y1="429.2" y2="429.2" stroke="#e6e6e6" stroke-width="1"/>
<text x="65.2" y="431.9" text-anchor="end" font-size="7.5" fill="#000" stroke="#000" stroke-width="0.15">400</text>
<line x1="75.4" x2="553.4" y1="453.7" y2="453.7" stroke="#e6e6e6" stroke-width="1"/>
<text x="65.2" y="456.4" text-anchor="end" font-size="7.5" fill="#000" stroke="#000" stroke-width="0.15">300</text>
<line x1="75.4" x2="553.4" y1="478.2" y2="478.2" stroke="#e6e6e6" stroke-width="1"/>
<text x="65.2" y="480.9" text-anchor="end" font-size="7.5" fill="#000" stroke="#000" stroke-width="0.15">200</text>
<line x1="75.4" x2="553.4" y1="502.7" y2="502.7" stroke="#e6e6e6" stroke-width="1"/>
<text x="65.2" y="505.4" text-anchor="end" font-size="7.5" fill="#000" stroke="#000" stroke-width="0.15">100</text>
<line x1="75.4" x2="553.4" y1="527.2" y2="527.2" stroke="#e6e6e6" stroke-width="1"/>
<text x="65.2" y="529.9" text-anchor="end" font-size="7.5" fill="#000" stroke="#000" stroke-width="0.15">0</text>
<line x1="75.4" x2="553.4" y1="527.2" y2="527.2" stroke="#ccd6eb" stroke-width="1"/>
<line x1="75.4" x2="75.4" y1="527.2" y2="532.2" stroke="#ccd6eb" stroke-width="1"/>
<line x1="95.3" x2="95.3" y1="527.2" y2="532.2" stroke="#ccd6eb" stroke-width="1"/>
<line x1="115.2" x2="115.2" y1="527.2" y2="532.2" stroke="#ccd6eb" stroke-width="1"/>
<line x1="135.2" x2="135.2" y1="527.2" y2="532.2" stroke="#ccd6eb" stroke-width="1"/>
<line x1="155.1" x2="155.1" y1="527.2" y2="532.2" stroke="#ccd6eb" stroke-width="1"/>
<line x1="175.0" x2="175.0" y1="527.2" y2="532.2" stroke="#ccd6eb" stroke-width="1"/>
<line x1="194.9" x2="194.9" y1="527.2" y2="532.2" stroke="#ccd6eb" stroke-width="1"/>
<line x1="214.8" x2="214.8" y1="527.2" y2="532.2" stroke="#ccd6eb" stroke-width="1"/>
<line x1="234.7" x2="234.7" y1="527.2" y2="532.2" stroke="#ccd6eb" stroke-width="1"/>
<line x1="254.7" x2="254.7" y1="527.2" y2="532.2" stroke="#ccd6eb" stroke-width="1"/>
<line x1="274.6" x2="274.6" y1="527.2" y2="532.2" stroke="#ccd6eb" stroke-width="1"/>
<line x1="294.5" x2="294.5" y1="527.2" y2="532.2" stroke="#ccd6eb" stroke-width="1"/>
<line x1="314.4" x2="314.4" y1="527.2" y2="532.2" stroke="#ccd6eb" stroke-width="1"/>
<line x1="334.3" x2="334.3" y1="527.2" y2="532.2" stroke="#ccd6eb" stroke-width="1"/>
<line x1="354.2" x2="354.2" y1="527.2" y2="532.2" stroke="#ccd6eb" stroke-width="1"/>
<line x1="374.1" x2="374.1" y1="527.2" y2="532.2" stroke="#ccd6eb" stroke-width="1"/>
<line x1="394.1" x2="394.1" y1="527.2" y2="532.2" stroke="#ccd6eb" stroke-width="1"/>
<line x1="414.0" x2="414.0" y1="527.2" y2="532.2" stroke="#ccd6eb" stroke-width="1"/>
<line x1="433.9" x2="433.9" y1="527.2" y2="532.2" stroke="#ccd6eb" stroke-width="1"/>
<line x1="453.8" x2="453.8" y1="527.2" y2="532.2" stroke="#ccd6eb" stroke-width="1"/>
<line x1="473.7" x2="473.7" y1="527.2" y2="532.2" stroke="#ccd6eb" stroke-width="1"/>
<line x1="493.6" x2="493.6" y1="527.2" y2="532.2" stroke="#ccd6eb" stroke-width="1"/>
<line x1="513.6" x2="513.6" y1="527.2" y2="532.2" stroke="#ccd6eb" stroke-width="1"/>
<line x1="533.5" x2="533.5" y1="527.2" y2="532.2" stroke="#ccd6eb" stroke-width="1"/>
<line x1="553.4" x2="553.4" y1="527.2" y2="532.2" stroke="#ccd6eb" stroke-width="1"/>
<rect x="80.5" y="456.9" width="10.4" height="70.3" fill="#99004c" stroke="#3a3a3a" stroke-width="0.8"/>
<text transform="translate(88.4,538.2) rotate(-45)" text-anchor="end" font-size="7.5" fill="#555">8 PM</text>
<rect x="100.4" y="476.7" width="10.4" height="50.5" fill="#99004c" stroke="#3a3a3a" stroke-width="0.8"/>
<text transform="translate(108.3,538.2) rotate(-45)" text-anchor="end" font-size="7.5" fill="#555">9 PM</text>
<rect x="120.3" y="485.3" width="10.4" height="41.9" fill="#ff0000" stroke="#3a3a3a" stroke-width="0.8"/>
<text transform="translate(128.2,538.2) rotate(-45)" text-anchor="end" font-size="7.5" fill="#555">10 PM</text>
<rect x="140.2" y="490.0" width="10.4" height="37.2" fill="#ff0000" stroke="#3a3a3a" stroke-width="0.8"/>
<text transform="translate(148.1,538.2) rotate(-45)" text-anchor="end" font-size="7.5" fill="#555">11 PM</text>
<rect x="160.1" y="497.3" width="10.4" height="29.9" fill="#ff7e00" stroke="#3a3a3a" stroke-width="0.8"/>
<text transform="translate(168.0,538.2) rotate(-45)" text-anchor="end" font-size="7.5" fill="#555">31 Jan 2021 12 AM</text>
<rect x="180.0" y="506.4" width="10.4" height="20.8" fill="#ffff00" stroke="#3a3a3a" stroke-width="0.8"/>
<text transform="translate(187.9,538.2) rotate(-45)" text-anchor="end" font-size="7.5" fill="#555">1 AM</text>
<rect x="200.0" y="510.1" width="10.4" height="17.1" fill="#ffff00" stroke="#3a3a3a" stroke-width="0.8"/>
<text transform="translate(207.9,538.2) rotate(-45)" text-anchor="end" font-size="7.5" fill="#555">2 AM</text>
<rect x="219.9" y="513.0" width="10.4" height="14.2" fill="#ffff00" stroke="#3a3a3a" stroke-width="0.8"/>
<text transform="translate(227.8,538.2) rotate(-45)" text-anchor="end" font-size="7.5" fill="#555">3 AM</text>
<rect x="239.8" y="516.9" width="10.4" height="10.3" fill="#00e400" stroke="#3a3a3a" stroke-width="0.8"/>
<text transform="translate(247.7,538.2) rotate(-45)" text-anchor="end" font-size="7.5" fill="#555">4 AM</text>
<rect x="259.7" y="521.1" width="10.4" height="6.1" fill="#00e400" stroke="#3a3a3a" stroke-width="0.8"/>
<text transform="translate(267.6,538.2) rotate(-45)" text-anchor="end" font-size="7.5" fill="#555">5 AM</text>
<rect x="279.6" y="524.0" width="10.4" height="3.2" fill="#00e400" stroke="#3a3a3a" stroke-width="0.8"/>
<text transform="translate(287.5,538.2) rotate(-45)" text-anchor="end" font-size="7.5" fill="#555">6 AM</text>
<rect x="299.5" y="525.0" width="10.4" height="2.2" fill="#00e400" stroke="#3a3a3a" stroke-width="0.8"/>
<text transform="translate(307.4,538.2) rotate(-45)" text-anchor="end" font-size="7.5" fill="#555">7 AM</text>
<rect x="319.5" y="526.2" width="10.4" height="1.0" fill="#00e400" stroke="#3a3a3a" stroke-width="0.8"/>
<text transform="translate(327.4,538.2) rotate(-45)" text-anchor="end" font-size="7.5" fill="#555">8 AM</text>
<rect x="339.4" y="525.0" width="10.4" height="2.2" fill="#00e400" stroke="#3a3a3a" stroke-width="0.8"/>
<text transform="translate(347.3,538.2) rotate(-45)" text-anchor="end" font-size="7.5" fill="#555">9 AM</text>
<rect x="359.3" y="522.8" width="10.4" height="4.4" fill="#00e400" stroke="#3a3a3a" stroke-width="0.8"/>
<text transform="translate(367.2,538.2) rotate(-45)" text-anchor="end" font-size="7.5" fill="#555">10 AM</text>
<rect x="379.2" y="520.6" width="10.4" height="6.6" fill="#00e400" stroke="#3a3a3a" stroke-width="0.8"/>
<text transform="translate(387.1,538.2) rotate(-45)" text-anchor="end" font-size="7.5" fill="#555">11 AM</text>
<rect x="399.1" y="517.2" width="10.4" height="10.0" fill="#00e400" stroke="#3a3a3a" stroke-width="0.8"/>
<text transform="translate(407.0,538.2) rotate(-45)" text-anchor="end" font-size="7.5" fill="#555">12 PM</text>
<rect x="419.0" y="516.4" width="10.4" height="10.8" fill="#00e400" stroke="#3a3a3a" stroke-width="0.8"/>
<text transform="translate(426.9,538.2) rotate(-45)" text-anchor="end" font-size="7.5" fill="#555">1 PM</text>
<rect x="439.0" y="469.1" width="10.4" height="58.1" fill="#99004c" stroke="#3a3a3a" stroke-width="0.8"/>
<text transform="translate(446.9,538.2) rotate(-45)" text-anchor="end" font-size="7.5" fill="#555">2 PM</text>
<rect x="458.9" y="419.9" width="10.4" height="107.3" fill="#4c0026" stroke="#3a3a3a" stroke-width="0.8"/>
<text transform="translate(466.8,538.2) rotate(-45)" text-anchor="end" font-size="7.5" fill="#555">3 PM</text>
<rect x="478.8" y="419.9" width="10.4" height="107.3" fill="#4c0026" stroke="#3a3a3a" stroke-width="0.8"/>
<text transform="translate(486.7,538.2) rotate(-45)" text-anchor="end" font-size="7.5" fill="#555">4 PM</text>
<rect x="498.7" y="467.2" width="10.4" height="60.0" fill="#99004c" stroke="#3a3a3a" stroke-width="0.8"/>
<text transform="translate(506.6,538.2) rotate(-45)" text-anchor="end" font-size="7.5" fill="#555">5 PM</text>
<rect x="518.6" y="470.6" width="10.4" height="56.6" fill="#99004c" stroke="#3a3a3a" stroke-width="0.8"/>
<text transform="translate(526.5,538.2) rotate(-45)" text-anchor="end" font-size="7.5" fill="#555">6 PM</text>
<rect x="538.5" y="456.9" width="10.4" height="70.3" fill="#99004c" stroke="#3a3a3a" stroke-width="0.8"/>
<text transform="translate(546.4,538.2) rotate(-45)" text-anchor="end" font-size="7.5" fill="#555">7 PM</text>
<text transform="translate(44.8,463) rotate(-90)" text-anchor="middle" font-size="8.4" fill="#111" letter-spacing="0.2">AQI</text>
<text x="291.8" y="380" text-anchor="middle" font-size="12.3" fill="#333" letter-spacing="0.25">Bishkek – PM2.5</text>
</g></svg>

<div id="cc" class="abs"><div class="h navy"><div style="margin-top:3px">Current Conditions</div><div style="font-size:8px;line-height:15.5px">observed at</div><div style="line-height:12px">Jan 31, 2021 7:00 PM (LT)</div></div>
<div class="p"><div style="margin-top:9px">287 AQI</div><div>Very Unhealthy</div><div>PM2.5</div></div>
<div class="m"><div style="text-align:center;font-weight:bold;color:#222;font-size:8px;width:160px;line-height:13px">Health Message</div>AQI values between 201 and 300 trigger a<br>health alert, meaning everyone may<br>experience more serious health effects.</div></div>
</body></html>
